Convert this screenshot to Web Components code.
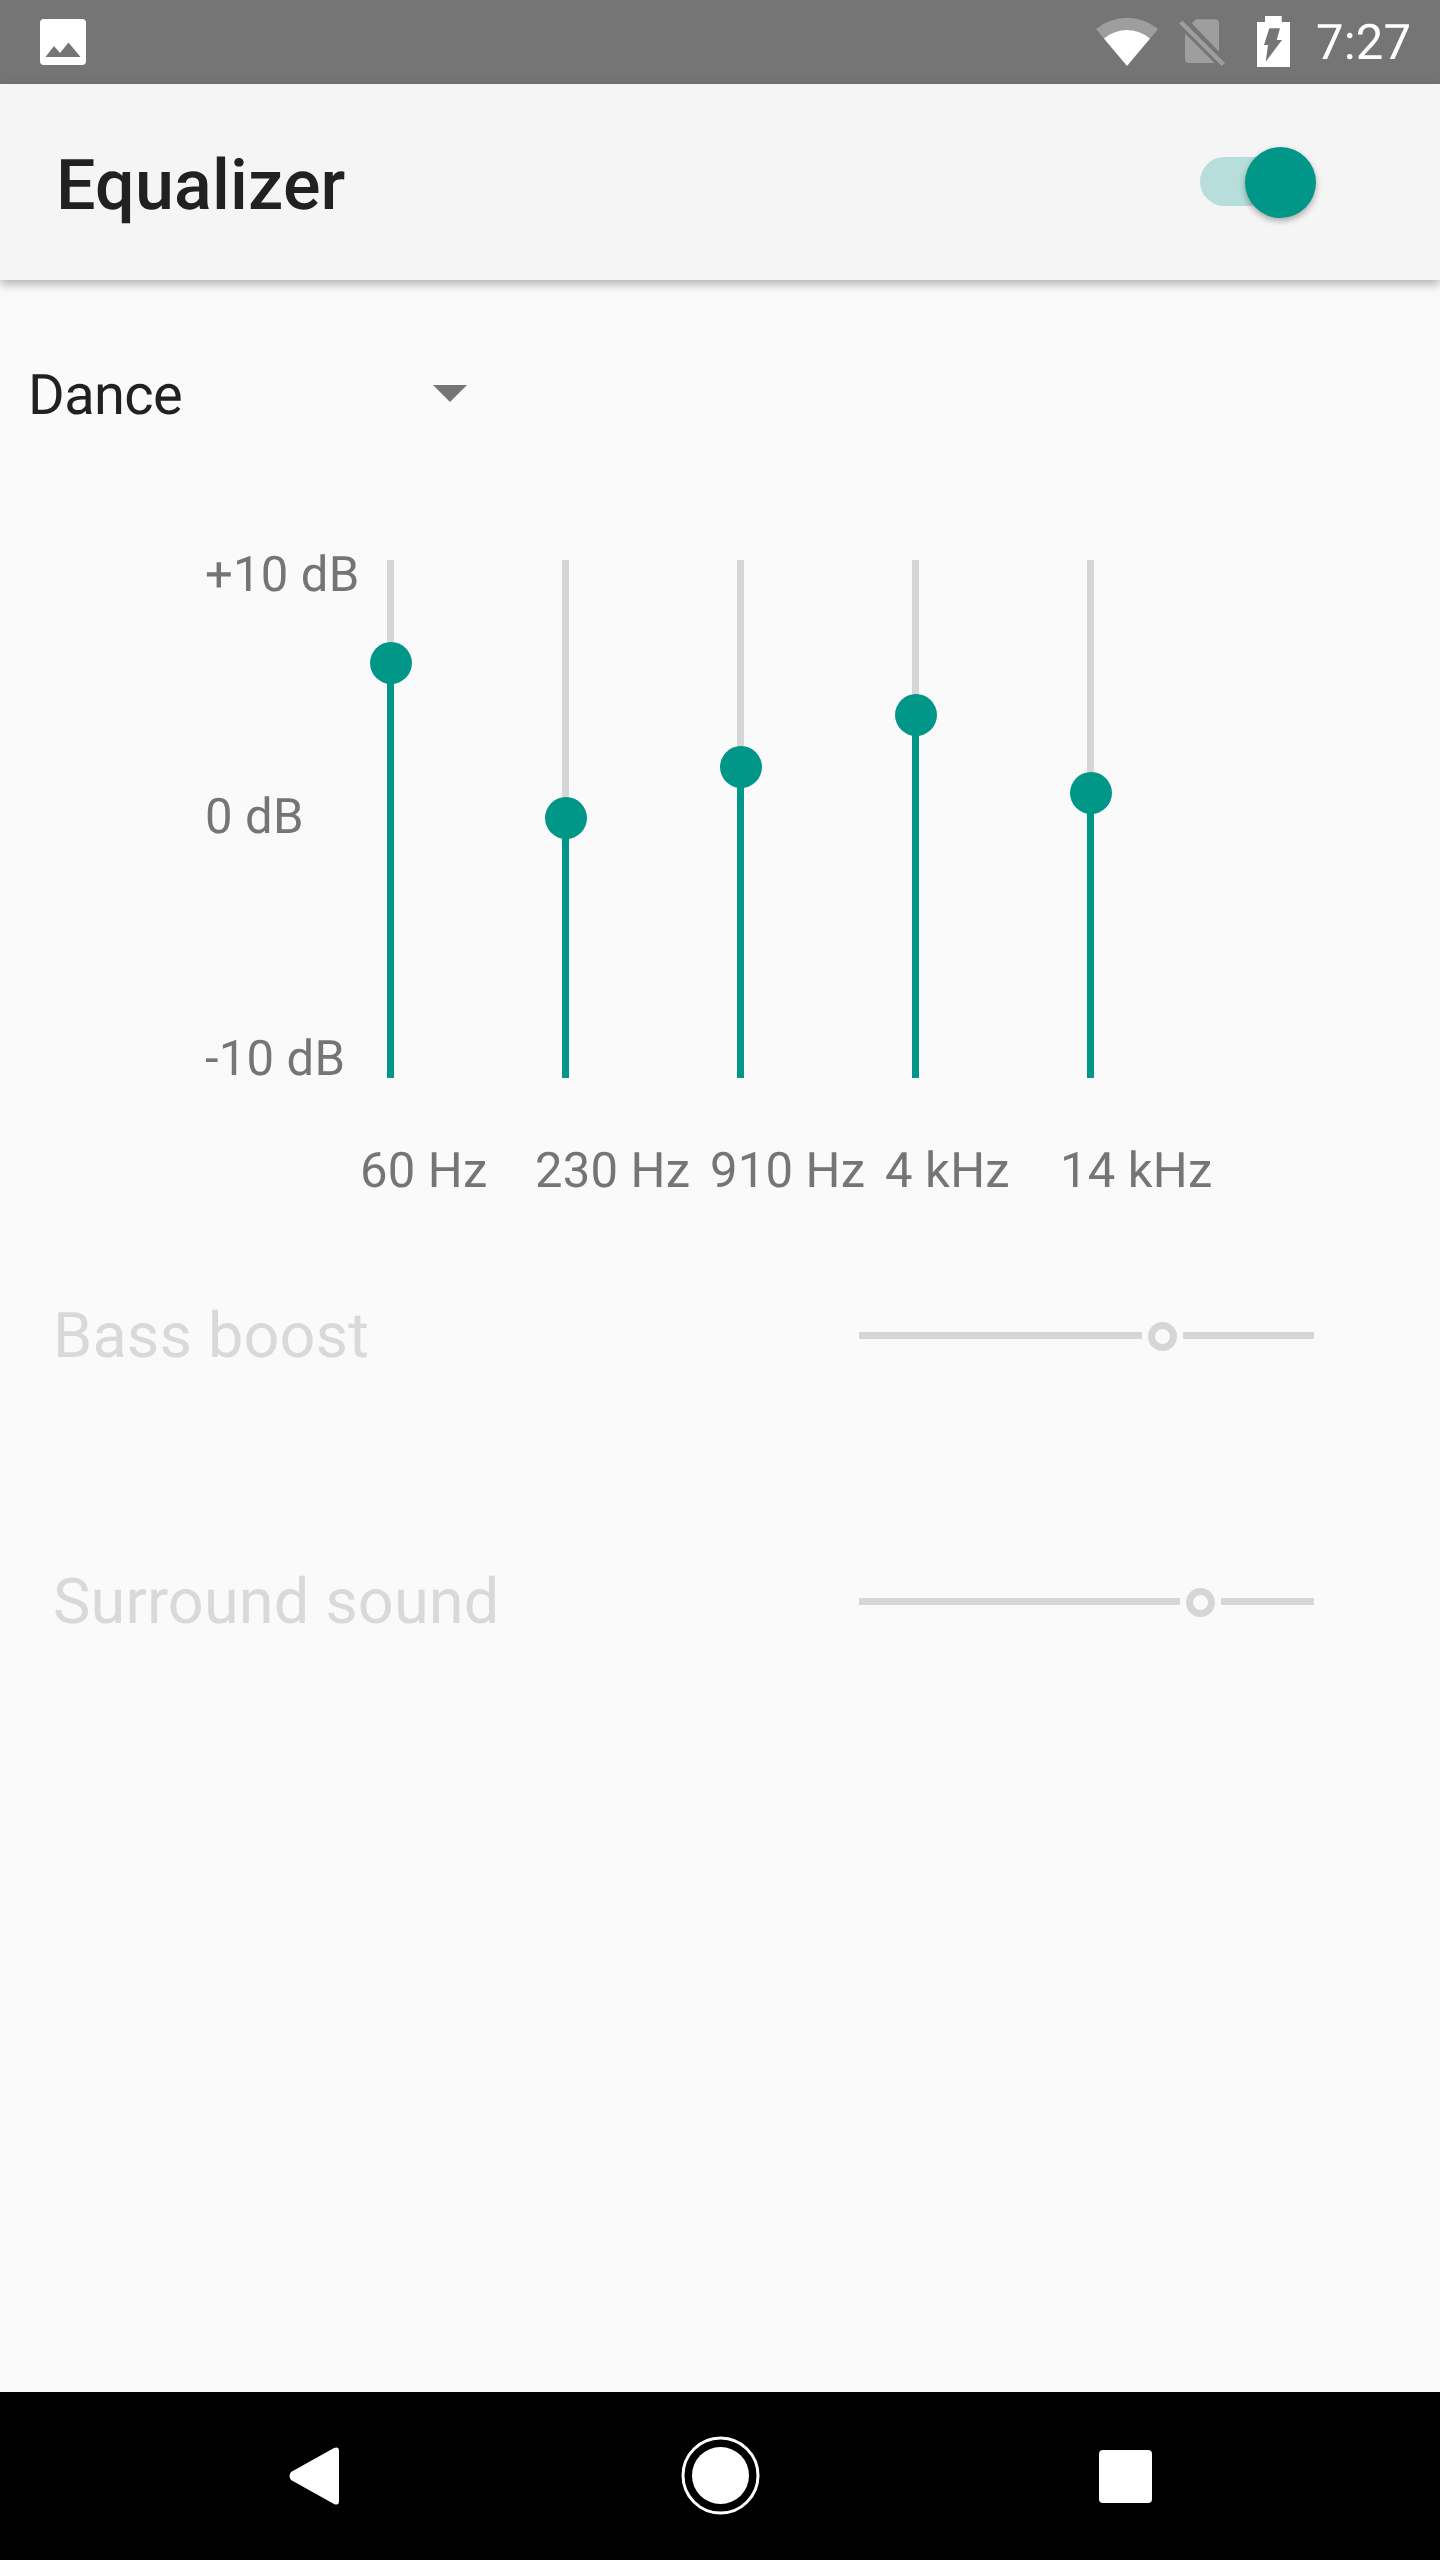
<!DOCTYPE html>
<html lang="en">
<head>
<meta charset="utf-8">
<title>Equalizer</title>
<style>
	html, body { margin: 0; background: #fafafa; }
	body { font-family: Roboto, "Liberation Sans", sans-serif; text-rendering: geometricPrecision; }
</style>
</head>
<body>
<eq-screen>
	<status-bar slot="status" time="7:27"></status-bar>
	<app-bar slot="bar" title="Equalizer"><eq-switch></eq-switch></app-bar>
	<preset-spinner label="Dance"></preset-spinner>
	<eq-panel>
		<eq-band label="60 Hz" thumb="103"></eq-band>
		<eq-band label="230 Hz" thumb="258"></eq-band>
		<eq-band label="910 Hz" thumb="207"></eq-band>
		<eq-band label="4 kHz" thumb="155"></eq-band>
		<eq-band label="14 kHz" thumb="233"></eq-band>
	</eq-panel>
	<effect-row label="Bass boost" value="283"></effect-row>
	<effect-row label="Surround sound" value="321"></effect-row>
	<nav-bar slot="nav"></nav-bar>
</eq-screen>

<script>
/** Full height column holding the status bar, app bar, content and nav bar. */
class EqScreen extends HTMLElement {
	connectedCallback() {
		this.attachShadow({ mode: "open" }).innerHTML = `
			<style>
				:host { display: flex; flex-direction: column; height: 2560px; background: #fafafa; overflow: hidden; }
				main { flex: 1 0 0; min-height: 0; }
			</style>
			<slot name="status"></slot>
			<slot name="bar"></slot>
			<main><slot></slot></main>
			<slot name="nav"></slot>
		`;
	}
}

class StatusBar extends HTMLElement {
	connectedCallback() {
		const time = this.getAttribute("time");
		this.attachShadow({ mode: "open" }).innerHTML = `
			<style>
				:host { display: flex; align-items: center; height: 84px; background: #757575; color: #fff; flex: none; }
				svg { display: block; flex: none; }
				.photo { margin-left: 40px; }
				.wifi { margin-left: auto; }
				.sim { margin-left: 18px; }
				.battery { margin-left: 31px; }
				.time { margin: 2px 30px 0 26px; font-size: 49px; line-height: 82px; width: 94px; letter-spacing: .2px; }
			</style>
			<svg class="photo" width="46" height="46" viewBox="0 0 46 46">
				<rect width="46" height="46" rx="4" fill="#fff"/>
				<path d="M5.500 38 14 27 20 34 28.500 23.500 40.500 38Z" fill="#757575"/>
			</svg>
			<svg class="wifi" width="64" height="52" viewBox="0 0 64 52">
				<path d="M1 13A48.300 48.300 0 0 1 63 13L55.100 22.400A36 36 0 0 0 8.900 22.400Z" fill="#fff" fill-opacity=".3"/>
				<path d="M8.900 22.400A36 36 0 0 1 55.100 22.400L32 50Z" fill="#fff"/>
			</svg>
			<svg class="sim" width="48" height="52" viewBox="0 0 48 52">
				<path d="M19 3.300H38Q42 3.300 42 7.300V35.700L14.700 7.300Z" fill="#fff" fill-opacity=".3"/>
				<path d="M8 17.300 37.500 47H12Q8 47 8 43Z" fill="#fff" fill-opacity=".3"/>
				<path d="M2 7.300 5.700 5 48 47 44.700 50Z" fill="#fff" fill-opacity=".3"/>
			</svg>
			<svg class="battery" width="34" height="52" viewBox="0 0 34 52">
				<path fill-rule="evenodd" d="M9 0H25.700V6H34V51H1V6H9ZM13.300 12.300H24L20.700 24H26L9.700 45.700 12 29H8Z" fill="#fff"/>
			</svg>
			<span class="time">${time}</span>
		`;
	}
}

class AppBar extends HTMLElement {
	connectedCallback() {
		this.attachShadow({ mode: "open" }).innerHTML = `
			<style>
				:host {
					display: flex; align-items: center; justify-content: space-between; flex: none;
					height: 196px; padding: 0 124px 0 56px; background: #f5f5f5; position: relative;
					box-shadow: 0 4px 10px rgba(0, 0, 0, .3);
				}
				h1 { margin: 8px 0 0; font: 500 70px/82px Roboto, sans-serif; letter-spacing: .2px; color: #212121; }
			</style>
			<h1>${this.getAttribute("title")}</h1>
			<slot></slot>
		`;
	}
}

class EqSwitch extends HTMLElement {
	connectedCallback() {
		this.attachShadow({ mode: "open" }).innerHTML = `
			<style>
				:host { display: block; position: relative; width: 116px; height: 71px; }
				.track { position: absolute; left: 0; top: 10px; width: 100px; height: 49px; border-radius: 25px; background: #b7dedb; }
				.thumb {
					position: absolute; right: 0; top: 0; width: 71px; height: 71px; border-radius: 50%; background: #009688;
					box-shadow: 0 3px 6px rgba(0, 0, 0, .32);
				}
			</style>
			<div class="track"></div>
			<div class="thumb"></div>
		`;
	}
}

class PresetSpinner extends HTMLElement {
	connectedCallback() {
		this.attachShadow({ mode: "open" }).innerHTML = `
			<style>
				:host { display: flex; align-items: center; justify-content: space-between; width: 439px; height: 66px; padding: 82px 0 0 28px; }
				span { font-size: 56px; line-height: 66px; letter-spacing: -.6px; color: #212121; }
				i { display: block; width: 0; height: 0; border: 17.500px solid transparent; border-top: 17px solid #757575; border-bottom: 0; margin-top: -4px; }
			</style>
			<span>${this.getAttribute("label")}</span>
			<i></i>
		`;
	}
}

class EqPanel extends HTMLElement {
	connectedCallback() {
		this.attachShadow({ mode: "open" }).innerHTML = `
			<style>
				:host { display: flex; padding: 132px 0 100px 205px; color: #757575; font-size: 49px; letter-spacing: .2px; }
				.scale {
					display: flex; flex-direction: column; justify-content: space-between;
					width: 156px; height: 542px; line-height: 58px; margin-top: -14px;
				}
				.bands { display: grid; grid-template-columns: repeat(5, 175px); }
			</style>
			<div class="scale"><span>+10 dB</span><span>0 dB</span><span>-10 dB</span></div>
			<div class="bands"><slot></slot></div>
		`;
	}
}

/** One vertical band slider; thumb is the distance of its centre from the track's top. */
class EqBand extends HTMLElement {
	connectedCallback() {
		const thumb = Number(this.getAttribute("thumb"));
		this.attachShadow({ mode: "open" }).innerHTML = `
			<style>
				:host { display: block; }
				.track { position: relative; width: 7px; height: 518px; margin-left: 26px; background: #d6d6d6; }
				.fill { position: absolute; left: 0; right: 0; bottom: 0; top: ${thumb}px; background: #009688; }
				.thumb { position: absolute; left: -17px; top: ${thumb - 21}px; width: 42px; height: 42px; border-radius: 50%; background: #009688; }
				.label { display: block; margin: 64px 0 -2px -1px; line-height: 58px; white-space: nowrap; }
			</style>
			<div class="track"><div class="fill"></div><div class="thumb"></div></div>
			<span class="label">${this.getAttribute("label")}</span>
		`;
	}
}

/** Disabled effect row: a label and a horizontal slider with a hollow thumb. */
class EffectRow extends HTMLElement {
	connectedCallback() {
		const value = Number(this.getAttribute("value"));
		this.attachShadow({ mode: "open" }).innerHTML = `
			<style>
				:host { display: flex; align-items: center; justify-content: space-between; height: 74px; padding: 0 126px 0 53px; margin-top: 192px; }
				:host(:first-of-type) { margin-top: 0; }
				span { font-size: 63px; line-height: 74px; letter-spacing: .15px; color: #d9d9d9; position: relative; top: 2px; }
				.slider { position: relative; width: 455px; height: 7px; display: flex; margin-top: 1px; }
				.a { width: ${value}px; background: #d6d6d6; }
				.b { flex: 1; margin-left: 41px; background: #d6d6d6; }
				.ring {
					position: absolute; left: ${value + 6}px; top: -10px; width: 15px; height: 15px;
					border: 7px solid #d6d6d6; border-radius: 50%; background: #fafafa;
				}
			</style>
			<span>${this.getAttribute("label")}</span>
			<div class="slider"><div class="a"></div><div class="b"></div><div class="ring"></div></div>
		`;
	}
}

class NavBar extends HTMLElement {
	connectedCallback() {
		this.attachShadow({ mode: "open" }).innerHTML = `
			<style>
				:host { display: flex; align-items: center; height: 168px; background: #000; flex: none; }
				svg { display: block; flex: none; }
				.back { margin-left: 289px; }
				.home { margin-left: 341px; }
				.recent { margin-left: 338px; }
			</style>
			<svg class="back" width="51" height="58" viewBox="0 0 51 58">
				<path d="M2 25 45 1Q50 -1 50 4V54Q50 59 45 57L2 33Q-1 29 2 25Z" fill="#fff"/>
			</svg>
			<svg class="home" width="80" height="80" viewBox="0 0 80 80">
				<circle cx="39.500" cy="39.500" r="37.500" fill="none" stroke="#fff" stroke-width="3"/>
				<circle cx="39.500" cy="39.500" r="28.500" fill="#fff"/>
			</svg>
			<svg class="recent" width="53" height="53" viewBox="0 0 53 53">
				<rect width="53" height="53" rx="4" fill="#fff"/>
			</svg>
		`;
	}
}

customElements.define("eq-screen", EqScreen);
customElements.define("status-bar", StatusBar);
customElements.define("app-bar", AppBar);
customElements.define("eq-switch", EqSwitch);
customElements.define("preset-spinner", PresetSpinner);
customElements.define("eq-panel", EqPanel);
customElements.define("eq-band", EqBand);
customElements.define("effect-row", EffectRow);
customElements.define("nav-bar", NavBar);
</script>
</body>
</html>
